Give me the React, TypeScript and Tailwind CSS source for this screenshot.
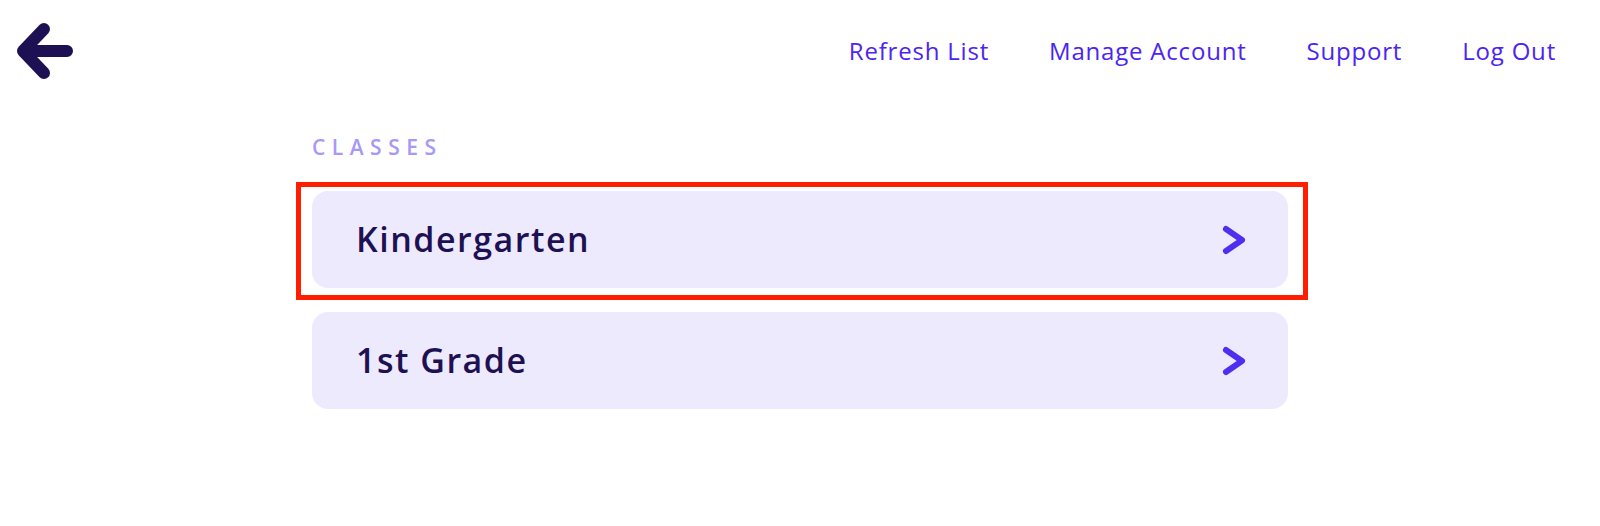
import React from "react";

const font = { fontFamily: '"Open Sans", "Noto Sans", sans-serif' };

function BackArrow() {
  return (
    <svg width="70" height="70" viewBox="0 0 70 70" fill="none" aria-label="Back">
      <path
        d="M57 35 H14 M34 13 L13 35 L34 57"
        stroke="#1e1153"
        strokeWidth="12"
        strokeLinecap="round"
        strokeLinejoin="round"
      />
    </svg>
  );
}

function Chevron() {
  return (
    <svg width="24" height="30" viewBox="0 0 24 30" fill="none">
      <path
        d="M4 4 L20 15 L4 26"
        stroke="#4e2ff0"
        strokeWidth="6"
        strokeLinecap="round"
        strokeLinejoin="round"
      />
    </svg>
  );
}

function ClassRow({ name, highlighted }: { name: string; highlighted?: boolean }) {
  return (
    <div className="relative">
      {highlighted && (
        <div className="pointer-events-none absolute -left-[16px] -right-[20px] -top-[9px] -bottom-[12px] border-[5px] border-[#ff1f00]" />
      )}
      <div className="flex h-[97px] items-center justify-between rounded-[16px] bg-[#edeafd] pl-[44px] pr-[42px]">
        <span className="text-[34px] font-semibold tracking-[1.5px] text-[#1e1153]">{name}</span>
        <Chevron />
      </div>
    </div>
  );
}

export default function App() {
  return (
    <div className="min-h-[526px] w-full bg-white" style={font}>
      <header className="flex h-[102px] items-center justify-between pl-[10px] pr-[44px]">
        <BackArrow />
        <nav className="flex items-center gap-[60px] text-[24px] tracking-[0.8px] text-[#4b24f3]">
          <a>Refresh List</a>
          <a>Manage Account</a>
          <a>Support</a>
          <a>Log Out</a>
        </nav>
      </header>
      <main className="mx-auto w-[976px] pt-[33px]">
        <div className="text-[21px] font-semibold leading-[24px] tracking-[6.5px] text-[#a898f8]">
          CLASSES
        </div>
        <div className="mt-[32px] flex flex-col gap-[24px]">
          <ClassRow name="Kindergarten" highlighted />
          <ClassRow name="1st Grade" />
        </div>
      </main>
    </div>
  );
}
